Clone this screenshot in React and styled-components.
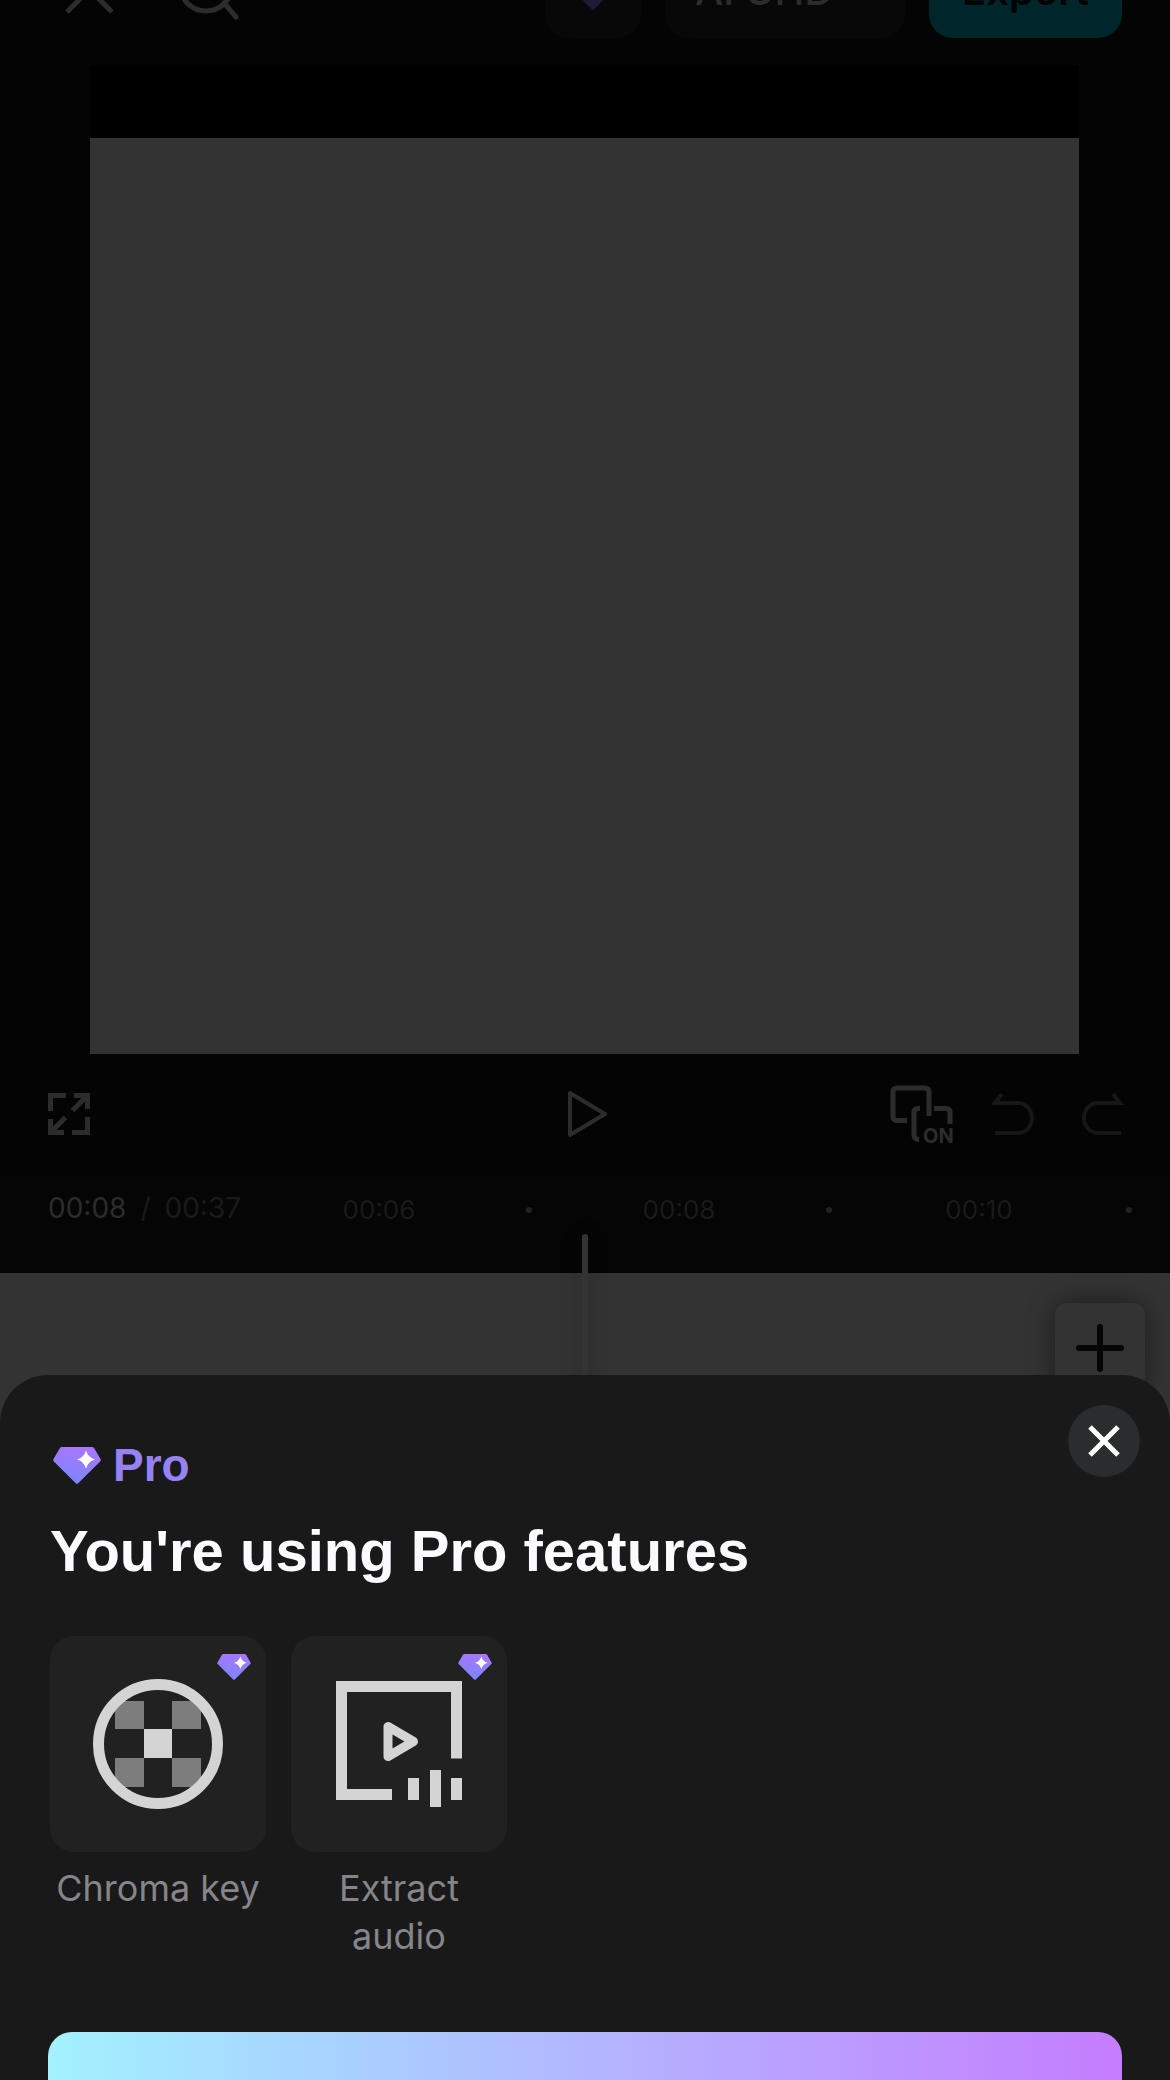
import styled, { createGlobalStyle } from "styled-components";

const GlobalStyle = createGlobalStyle`
  * {
    box-sizing: border-box;
  }
  body {
    margin: 0;
    background-color: #040404;
    font-family: "Inter", "Roboto", sans-serif;
  }
  button {
    border: none;
    padding: 0;
    background: none;
    font-family: inherit;
    cursor: pointer;
  }
  svg {
    display: block;
  }
`;

const Page = styled.div`
  display: flex;
  flex-direction: column;
  height: 100vh;
  overflow: hidden;
  background-color: #040404;
`;

const Header = styled.header`
  display: flex;
  flex: none;
  align-items: center;
  gap: 24px;
  height: 84px;
  margin-top: -46px;
  padding: 0 48px;
`;
const HeaderIcons = styled.div`
  display: flex;
  gap: 32px;
  margin-right: auto;
`;
const IconButton = styled.button`
  display: flex;
  align-items: center;
  justify-content: center;
  color: ${(props) => (props.$muted ? "#171717" : "#2c2c2c")};
`;
const HeaderButton = styled.button`
  display: flex;
  align-items: center;
  justify-content: ${(props) => (props.$start ? "flex-start" : "center")};
  width: ${(props) => props.$width};
  height: 84px;
  padding: ${(props) => (props.$start ? "0 30px 10px" : "0 0 10px")};
  border-radius: 24px;
  background-color: ${(props) => (props.$primary ? "#00262b" : "#080808")};
  color: ${(props) => (props.$primary ? "#020404" : "#2c2c2c")};
  font-size: 40px;
  font-weight: ${(props) => (props.$primary ? 600 : 500)};
  line-height: 48px;
`;

const Stage = styled.main`
  flex: none;
  margin: 27px 91px 0 90px;
  padding-top: 73px;
  background-color: #000000;
`;
const Video = styled.div`
  height: 916px;
  background-color: #333333;
`;

const Controls = styled.div`
  display: grid;
  flex: none;
  grid-template-columns: 1fr auto 1fr;
  align-items: center;
  height: 121px;
  padding: 0 46px 2px 48px;
`;
const ControlGroup = styled.div`
  display: flex;
  align-items: center;
  justify-content: ${(props) => (props.$end ? "flex-end" : "flex-start")};
  gap: 36px;
`;
const HistoryGroup = styled.div`
  display: flex;
  gap: 48px;
`;

const Timeline = styled.section`
  position: relative;
  flex: none;
  background-color: #050505;
`;
const TimeRow = styled.div`
  display: flex;
  align-items: center;
  height: 98px;
  padding-left: 48px;
  padding-bottom: 32px;
  overflow: hidden;
`;
const Clock = styled.div`
  display: flex;
  flex: none;
  gap: 14px;
  width: 256px;
  color: #1a1a1a;
  font-size: 28px;
  line-height: 36px;
`;
const CurrentTime = styled.span`
  color: #2c2c2c;
`;
const Ruler = styled.div`
  display: flex;
  flex: none;
  padding-top: 4px;
`;
const Tick = styled.span`
  display: flex;
  flex: none;
  align-items: center;
  justify-content: center;
  width: 150px;
  color: #1a1a1a;
  font-size: 26px;
  line-height: 36px;
`;
const Dot = styled.i`
  width: 6px;
  height: 6px;
  border-radius: 50%;
  background-color: #222222;
`;
const Track = styled.div`
  display: flex;
  justify-content: flex-end;
  height: 150px;
  padding: 30px 25px;
  background-color: #333333;
`;
const AddButton = styled.button`
  display: flex;
  align-items: center;
  justify-content: center;
  width: 90px;
  height: 90px;
  border-radius: 12px;
  background-color: #333333;
  color: #060606;
  box-shadow: 0 0 24px rgba(0, 0, 0, 0.5);
`;
const Playhead = styled.div`
  position: absolute;
  top: 59px;
  bottom: 0;
  left: calc(50% - 3px);
  width: 6px;
  border-radius: 3px;
  background-color: #333333;
  box-shadow: 0 0 20px rgba(0, 0, 0, 0.28);
`;

const Sheet = styled.section`
  position: relative;
  flex: none;
  margin-top: -48px;
  padding: 60px 48px;
  border-radius: 48px 48px 0 0;
  background-color: #191919;
`;
const CloseButton = styled.button`
  position: absolute;
  top: 30px;
  right: 30px;
  display: flex;
  align-items: center;
  justify-content: center;
  width: 72px;
  height: 72px;
  border-radius: 50%;
  background-color: #2a2d2e;
  color: #ffffff;
`;
const ProLabel = styled.div`
  display: flex;
  align-items: center;
  gap: 12px;
  padding-left: 5px;
  color: #9583f5;
  font-family: "Liberation Sans", Arial, sans-serif;
  font-size: 46px;
  font-weight: bold;
  line-height: 60px;
`;
const Title = styled.h1`
  margin: 21px 0 50px;
  padding-left: 2px;
  color: #fafaff;
  font-family: "Liberation Sans", Arial, sans-serif;
  font-size: 58px;
  font-weight: bold;
  line-height: 70px;
`;
const FeatureList = styled.ul`
  display: flex;
  gap: 25px;
  margin: 0 0 72px;
  padding: 0 2px;
  list-style: none;
`;
const Feature = styled.li`
  width: 216px;
  color: #85858a;
  font-size: 36px;
  line-height: 48px;
  text-align: center;
`;
const FeatureCard = styled.div`
  position: relative;
  height: 216px;
  margin-bottom: 12px;
  border-radius: 24px;
  background-color: #212121;
`;
const Badge = styled.span`
  position: absolute;
  top: 18px;
  right: 15px;
`;
const UpgradeButton = styled.button`
  display: block;
  width: 100%;
  height: 132px;
  border-radius: 24px;
  background: linear-gradient(90deg, #a3f2ff 0%, #a8d0ff 28%, #b4b4ff 52%, #c47dff 100%);
`;

const Gem = ({ id, width, height, dim }) => (
  <svg width={width} height={height} viewBox="0 0 48 37" aria-hidden="true">
    <defs>
      <linearGradient id={id} x1="0.65" y1="0" x2="0.4" y2="1">
        <stop offset="0" stopColor={dim ? "#221a35" : "#aa76fb"} />
        <stop offset="1" stopColor={dim ? "#1b1b38" : "#7a86ff"} />
      </linearGradient>
    </defs>
    <path
      d="M9 0H39Q40.500 0 41.200 1.200L47.500 12Q48.300 13.300 47.200 14.400L25.200 36.200Q24 37.400 22.800 36.200L.8 14.400Q-.3 13.300 .5 12L6.800 1.200Q7.500 0 9 0Z"
      fill={`url(#${id})`}
    />
    {!dim && (
      <path
        d="M33 3.500Q35 10.500 42 12.500Q35 14.500 33 21.500Q31 14.500 24 12.500Q31 10.500 33 3.500Z"
        fill="#ffffff"
      />
    )}
  </svg>
);

const ChromaIcon = () => (
  <svg width="216" height="216" viewBox="0 0 216 216" aria-hidden="true">
    <clipPath id="chroma-ring">
      <circle cx="108" cy="108" r="58" />
    </clipPath>
    <g clipPath="url(#chroma-ring)" fill="#7d7d7d">
      <path d="M65 65H94V93H65zM122 65H151V93H122zM65 122H94V151H65zM122 122H151V151H122z" />
      <path d="M94 93H122V122H94z" fill="#d4d4d4" />
    </g>
    <circle cx="108" cy="108" r="59.500" fill="none" stroke="#d4d4d4" strokeWidth="11" />
  </svg>
);

const ExtractIcon = () => (
  <svg width="216" height="216" viewBox="0 0 216 216" aria-hidden="true">
    <path
      d="M101 158.500H50.500V50.500H165.500V122.500M122.500 142V164M144.500 134V171M165.500 142V164"
      fill="none"
      stroke="#d4d4d4"
      strokeWidth="11"
    />
    <path
      d="M97 90.500V120.500L122.500 105.500Z"
      fill="none"
      stroke="#d4d4d4"
      strokeWidth="9"
      strokeLinejoin="round"
    />
  </svg>
);

const times = ["00:06", null, "00:08", null, "00:10", null];

const features = [
  { id: "chroma", name: "Chroma key", icon: <ChromaIcon /> },
  { id: "extract", name: "Extract audio", icon: <ExtractIcon /> },
];

const App = () => {
  return (
    <Page>
      <GlobalStyle />
      <Header>
        <HeaderIcons>
          <IconButton aria-label="Close project">
            <svg width="84" height="84" fill="none" stroke="currentColor" strokeWidth="5">
              <path d="M19 13L64 58M64 13L19 58" />
            </svg>
          </IconButton>
          <IconButton aria-label="Search">
            <svg width="84" height="84" fill="none" stroke="currentColor" strokeWidth="5">
              <circle cx="42" cy="31" r="26" />
              <path d="M60 49L72 63" strokeLinecap="round" />
            </svg>
          </IconButton>
        </HeaderIcons>
        <HeaderButton $width="96px" aria-label="Pro">
          <Gem id="gem-header" width={48} height={37} dim />
        </HeaderButton>
        <HeaderButton $width="240px" $start>
          AI UHD
        </HeaderButton>
        <HeaderButton $width="193px" $primary>
          Export
        </HeaderButton>
      </Header>

      <Stage>
        <Video />
      </Stage>

      <Controls>
        <ControlGroup>
          <IconButton aria-label="Full screen">
            <svg width="42" height="42" fill="none" stroke="currentColor" strokeWidth="5">
              <path d="M18 2.500H2.500V18M26 2.500H39.500V16M39.500 24V39.500H24M16 39.500H2.500V26" />
              <path d="M39 3L24.500 17.500M3 39L17.500 24.500" />
            </svg>
          </IconButton>
        </ControlGroup>
        <IconButton aria-label="Play">
          <svg width="42" height="48" fill="none" stroke="currentColor" strokeWidth="4" strokeLinejoin="round">
            <path d="M5 3V45L40 24Z" />
          </svg>
        </IconButton>
        <ControlGroup $end>
          <IconButton aria-label="Cover on">
            <svg width="66" height="62" fill="none" stroke="currentColor" strokeWidth="5">
              <path d="M17 37.500H7Q3 37.500 3 33.500V9Q3 5 7 5H35Q39 5 39 9V33" />
              <path d="M30 25.500H28Q24 25.500 24 29.500V52Q24 56.500 29 56.500M44 25.500H56Q60 25.500 60 29.500V41" />
              <text
                x="33"
                y="60"
                fill="currentColor"
                stroke="none"
                fontFamily="Inter"
                fontSize="20"
                fontWeight="bold"
              >
                ON
              </text>
            </svg>
          </IconButton>
          <HistoryGroup>
            <IconButton $muted aria-label="Undo">
              <svg width="42" height="44" fill="none" stroke="currentColor" strokeWidth="4">
                <path d="M10 2L3 11H26C34 11 40 18 40 26C40 34 34 41 26 41H3" />
              </svg>
            </IconButton>
            <IconButton $muted aria-label="Redo">
              <svg width="42" height="44" fill="none" stroke="currentColor" strokeWidth="4">
                <path d="M31 2L38 11H16C8 11 2 18 2 26C2 34 8 41 16 41H39" />
              </svg>
            </IconButton>
          </HistoryGroup>
        </ControlGroup>
      </Controls>

      <Timeline>
        <TimeRow>
          <Clock>
            <CurrentTime>00:08</CurrentTime>
            <span>/</span>
            <span>00:37</span>
          </Clock>
          <Ruler>
            {times.map((time, i) => (
              <Tick key={i}>{time || <Dot />}</Tick>
            ))}
          </Ruler>
        </TimeRow>
        <Track>
          <AddButton aria-label="Add clip">
            <svg width="48" height="48" stroke="currentColor" strokeWidth="6" strokeLinecap="round">
              <path d="M24 3V45M3 24H45" />
            </svg>
          </AddButton>
        </Track>
        <Playhead />
      </Timeline>

      <Sheet>
        <CloseButton aria-label="Close">
          <svg width="32" height="32" stroke="currentColor" strokeWidth="5">
            <path d="M2 2L30 30M30 2L2 30" />
          </svg>
        </CloseButton>
        <ProLabel>
          <Gem id="gem-label" width={48} height={37} />
          Pro
        </ProLabel>
        <Title>You're using Pro features</Title>
        <FeatureList>
          {features.map((v) => (
            <Feature key={v.id}>
              <FeatureCard>
                {v.icon}
                <Badge>
                  <Gem id={`gem-${v.id}`} width={34} height={26} />
                </Badge>
              </FeatureCard>
              {v.name}
            </Feature>
          ))}
        </FeatureList>
        <UpgradeButton aria-label="Upgrade to Pro" />
      </Sheet>
    </Page>
  );
};

export default App;
